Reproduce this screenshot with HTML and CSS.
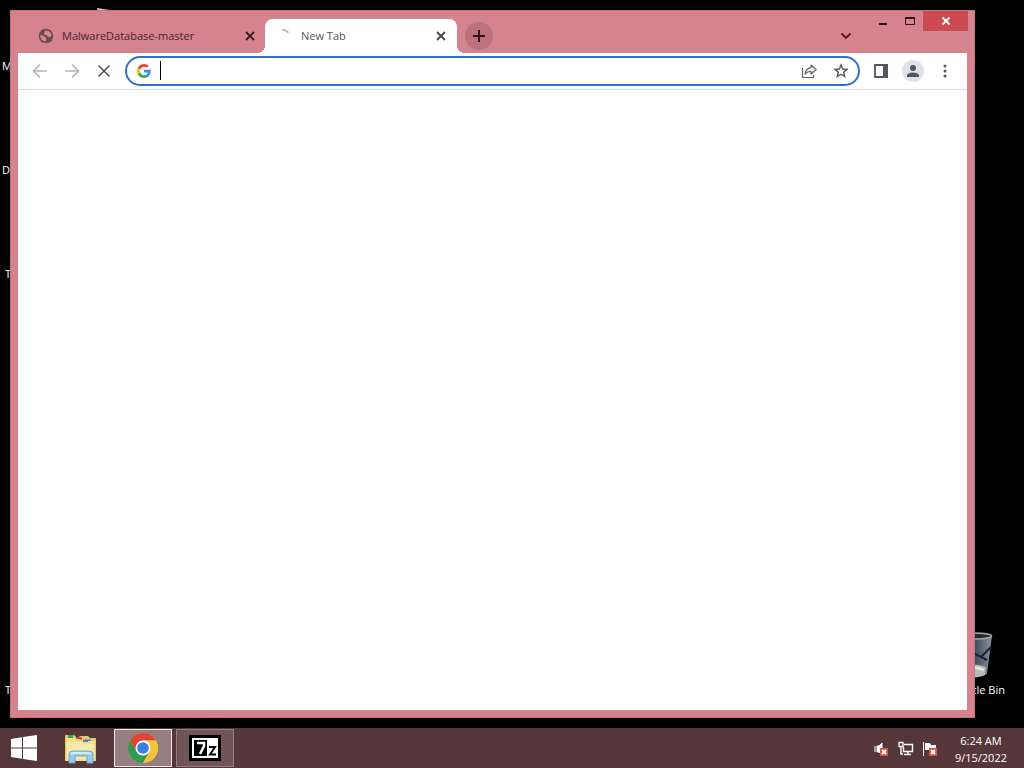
FILE: index.html
```html
<!DOCTYPE html>
<html lang="en">
<head>
<meta charset="utf-8">
<title>Desktop</title>
<link rel="stylesheet" href="styles.css">
</head>
<body>
<main class="desktop">
  <span class="shortcut shortcut-1">M</span>
  <span class="shortcut shortcut-2">D</span>
  <span class="shortcut shortcut-3">T</span>
  <span class="shortcut shortcut-4">T</span>
  <svg class="folder-peek" width="20" height="6" viewBox="0 0 20 6"><path d="M0 0L19 3V6H1z" fill="#d8d0bc"/></svg>
  <div class="recycle">
    <svg width="42" height="48" viewBox="0 0 42 48">
      <defs><linearGradient id="bin" x1="0" x2="1"><stop offset="0" stop-color="#333b49"/><stop offset=".6" stop-color="#465062"/><stop offset="1" stop-color="#8c939f"/></linearGradient></defs>
      <path d="M2 3L8 43Q22 49 36 42L41 3z" fill="url(#bin)"/>
      <path d="M40 15L30 25L22 21M30 25L36 28" fill="none" stroke="#1b2030" stroke-width="2"/>
      <path d="M8 34Q22 30 35 35L34 43Q22 48 9 43z" fill="#b9b9b4"/>
      <path d="M12 38Q22 33 33 38" stroke="#e5e4de" stroke-width="3" fill="none"/>
      <ellipse cx="21" cy="4" rx="19.500" ry="3" fill="#252a33" stroke="#a5a9ad" stroke-width="1.500"/>
    </svg>
    <span>cle Bin</span>
  </div>

  <section class="window">
    <header class="titlebar">
      <div class="tab">
        <svg width="16" height="16" viewBox="0 0 16 16"><circle cx="8" cy="8" r="7.300" fill="#70484e"/><path d="M2 7.500Q4 7 6 8.200T8.500 11Q8 12 7.500 13.500Q3 13 2 7.500M7 2.500Q12 2 13.600 7L12 9.300Q9.500 9.600 9.300 7.500L6.300 6.500Q6 4.500 7 2.500" fill="#d48991"/></svg>
        <span class="tab-title">MalwareDatabase-master</span>
        <button class="tab-close" aria-label="Close tab"><svg width="10" height="10" viewBox="0 0 10 10"><path d="M1 1L9 9M9 1L1 9" stroke="#3d1c22" stroke-width="1.800"/></svg></button>
      </div>
      <div class="tab active">
        <svg width="16" height="16" viewBox="0 0 16 16"><path d="M5 1.500Q9 2 11.500 4.500" fill="none" stroke="#a2b1b9" stroke-width="1.600"/></svg>
        <span class="tab-title">New Tab</span>
        <button class="tab-close" aria-label="Close tab"><svg width="10" height="10" viewBox="0 0 10 10"><path d="M1 1L9 9M9 1L1 9" stroke="#44474b" stroke-width="1.800"/></svg></button>
      </div>
      <button class="new-tab" aria-label="New tab"><svg width="12" height="12" viewBox="0 0 12 12"><path d="M6 0V12M0 6H12" stroke="#35131b" stroke-width="2"/></svg></button>
      <button class="tab-search" aria-label="Search tabs"><svg width="12" height="8" viewBox="0 0 12 8"><path d="M1.500 1.500L6 6L10.500 1.500" fill="none" stroke="#5d1822" stroke-width="1.800"/></svg></button>
      <div class="controls">
        <button aria-label="Minimize"><svg width="10" height="10" viewBox="0 0 10 10"><path d="M1 8H9" stroke="#35131b" stroke-width="2"/></svg></button>
        <button aria-label="Maximize"><svg width="10" height="10" viewBox="0 0 10 10"><path d="M.5 1.500H9.500V8.500H.5z" fill="none" stroke="#35131b"/><path d="M0 2H10" stroke="#35131b" stroke-width="2"/></svg></button>
        <button class="close" aria-label="Close"><svg width="10" height="10" viewBox="0 0 10 10"><path d="M1.500 1.500L8.500 8.500M8.500 1.500L1.500 8.500" stroke="#fff" stroke-width="1.800"/></svg></button>
      </div>
    </header>
    <nav class="toolbar">
      <button class="nav-button" aria-label="Back"><svg width="16" height="16" viewBox="0 0 16 16"><path d="M15 8H2M8 1.500L1.500 8L8 14.500" fill="none" stroke="#b5b7b9" stroke-width="1.600"/></svg></button>
      <button class="nav-button" aria-label="Forward"><svg width="16" height="16" viewBox="0 0 16 16"><path d="M1 8H14M8 1.500L14.500 8L8 14.500" fill="none" stroke="#b5b7b9" stroke-width="1.600"/></svg></button>
      <button class="nav-button" aria-label="Stop"><svg width="16" height="16" viewBox="0 0 16 16"><path d="M2.500 2.500L13.500 13.500M13.500 2.500L2.500 13.500" stroke="#55585c" stroke-width="1.700"/></svg></button>
      <div class="omnibox">
        <svg width="14" height="14" viewBox="0 0 48 48"><path fill="#ea4335" d="M24 9.500c3.500 0 6.700 1.200 9.200 3.600l6.900-6.900C35.900 2.400 30.500 0 24 0 14.600 0 6.500 5.400 2.600 13.200l8 6.200C12.400 13.700 17.700 9.500 24 9.500z"/><path fill="#4285f4" d="M47 24.600c0-1.600-.2-3.100-.4-4.600H24v9h12.900c-.6 3-2.200 5.500-4.700 7.200l7.700 6C44.400 38 47 31.800 47 24.600z"/><path fill="#fbbc05" d="M10.500 28.600a14.500 14.500 0 0 1 0-9.200l-8-6.200a24 24 0 0 0 0 21.600z"/><path fill="#34a853" d="M24 48c6.500 0 11.900-2.100 15.900-5.800l-7.700-6c-2.200 1.400-4.900 2.300-8.200 2.300-6.300 0-11.600-4.200-13.500-9.900l-8 6.200C6.500 42.600 14.600 48 24 48z"/></svg>
        <span class="caret"></span>
        <input class="address" type="text" aria-label="Address and search bar">
        <button aria-label="Share"><svg width="16" height="16" viewBox="0 0 16 16"><path d="M1.500 5V14.500H12.500V12" fill="none" stroke="#5f6368" stroke-width="1.200"/><path d="M10 2L15.200 6.500L10 11V8.500Q6.500 8.200 4 11Q4.500 5.500 10 4.600z" fill="none" stroke="#5f6368" stroke-width="1.200" stroke-linejoin="round"/></svg></button>
        <button aria-label="Bookmark this tab"><svg width="16" height="16" viewBox="0 0 16 16"><path d="M8 2L9.700 6L14 6.400L10.700 9.200L11.700 13.500L8 11.200L4.300 13.500L5.300 9.200L2 6.400L6.300 6z" fill="none" stroke="#54585d" stroke-width="1.400"/></svg></button>
      </div>
      <button class="side-panel" aria-label="Side panel"><svg width="14" height="14" viewBox="0 0 14 14"><path d="M1 1H13V13H1z" fill="#fff" stroke="#54575c" stroke-width="1.800"/><path d="M9 0H14V14H9z" fill="#54575c"/></svg></button>
      <button class="profile" aria-label="Profile"><svg width="14" height="14" viewBox="0 0 14 14" fill="#4c5867"><circle cx="7" cy="4" r="3"/><path d="M1 13V11Q2 8.500 7 8.500T13 11V13z"/></svg></button>
      <button class="menu" aria-label="Menu"><svg width="4" height="14" viewBox="0 0 4 14" fill="#54575c"><circle cx="2" cy="2" r="1.500"/><circle cx="2" cy="7" r="1.500"/><circle cx="2" cy="12" r="1.500"/></svg></button>
    </nav>
    <div class="page"></div>
  </section>
</main>

<footer class="taskbar">
  <button class="start" aria-label="Start"><svg width="26" height="26" viewBox="0 0 26 26" fill="#fff"><path d="M0 4L11 2.300V12.400H0zM12 2.100L26 0V12.400H12zM0 13.400H11V23.700L0 22zM12 13.400H26V26L12 23.900z"/></svg></button>
  <button class="task" aria-label="File Explorer"><svg width="34" height="30" viewBox="0 0 34 30">
    <path d="M1 2Q1 1 2 1H10L12 3H15L16 2H24L26 4H31Q32 4 32 5V27H1z" fill="#dfc878"/>
    <path d="M4 2H9" stroke="#36a852" stroke-width="2"/><path d="M12 4.500H18" stroke="#d44a36" stroke-width="2"/><path d="M21 6.500H27" stroke="#4a82bd" stroke-width="2"/>
    <path d="M2 4H14L17 7H31V27H2z" fill="#f4df91"/><path d="M3 8H17L20 10H30V25H3z" fill="#f8e9ab"/>
    <path d="M4 3H9" stroke="#36a852" stroke-width="2"/><path d="M12 4H17" stroke="#d44a36" stroke-width="2"/><path d="M19 7H24" stroke="#4a82bd" stroke-width="2"/>
    <path d="M5 29V20Q5 17 9 17H25Q29 17 29 20V29H23V22H11V29z" fill="#92cee9" stroke="#66acd0"/><path d="M7 20Q8 19 10 19H24Q26 19 27 20" fill="none" stroke="#d2edf6" stroke-width="2"/>
  </svg></button>
  <button class="task current" aria-label="Google Chrome"><svg width="30" height="30" viewBox="0 0 30 30">
    <circle cx="15" cy="15" r="15" fill="#f5c33b"/>
    <path d="M2 7.500A15 15 0 0 1 28 7.500H15L8.500 18.800z" fill="#db4437"/>
    <path d="M2 7.500A15 15 0 0 0 15 30L21.500 18.800L8.500 18.800z" fill="#329a50"/>
    <path d="M28 7.500A15 15 0 0 1 15 30L21.500 18.800L21.500 11L15 7.500z" fill="#f5c33b"/>
    <circle cx="15" cy="15" r="7.500" fill="#fff"/><circle cx="15" cy="15" r="5.800" fill="#397fe6"/>
  </svg></button>
  <button class="task running" aria-label="7-Zip"><svg width="32" height="26" viewBox="0 0 32 26">
    <path d="M0 0H32V26H0z"/><path d="M3 3H29V23H3z" fill="#fff"/><path d="M5 5H18V21H5z"/><path d="M8 8H15V11L11 19" fill="none" stroke="#fff" stroke-width="2.500"/><path d="M20 12H26L21 19.500H27" fill="none" stroke="#000" stroke-width="2"/>
  </svg></button>
  <div class="tray">
    <svg width="16" height="16" viewBox="0 0 16 16"><path d="M1 5V11M3 5H5L8 2V14L5 11H3z" fill="#fff" stroke="#fff"/><path d="M6 7H14V15H6z" fill="#cf5546"/><path d="M8 9L12 13M12 9L8 13" stroke="#fff" stroke-width="1.800"/></svg>
    <svg width="16" height="16" viewBox="0 0 16 16"><path d="M6 3.500H14.500V10.500H5.500V6M10 11V14M6 13.500H13M3 6V13H5" fill="none" stroke="#fff" stroke-width="1.400"/><path d="M1 1.500H5V5.500H1z" fill="#553538" stroke="#fff" stroke-width="1.300"/></svg>
    <svg width="16" height="16" viewBox="0 0 16 16"><path d="M1.500 1V15" stroke="#fff"/><path d="M3 2H8L9 4H14V9H3z" fill="#fff"/><path d="M7 7H15V15H7z" fill="#cf5546"/><path d="M9 9L13 13M13 9L9 13" stroke="#fff" stroke-width="1.800"/></svg>
  </div>
  <div class="clock"><time>6:24 AM</time><time>9/15/2022</time></div>
</footer>
</body>
</html>
```
FILE: styles.css
```css
* { box-sizing: border-box; }
body {
  margin: 0;
  height: 100vh;
  display: flex;
  flex-direction: column;
  background: #000;
  color: #fff;
  font-family: "Open Sans", "Noto Sans", sans-serif;
  font-size: 11px;
  line-height: 16px;
  overflow: hidden;
}
svg { display: block; flex: none; }
button {
  padding: 0;
  border: 0;
  background: none;
  display: flex;
  align-items: center;
  justify-content: center;
  flex: none;
}
.desktop { flex: 1; position: relative; }
.shortcut { position: absolute; left: 2px; }
.shortcut-1 { top: 58px; }
.shortcut-2 { top: 162px; }
.shortcut-3 { top: 266px; left: 5px; }
.shortcut-4 { top: 682px; left: 5px; }
.folder-peek { position: absolute; left: 97px; top: 8px; }
.recycle {
  position: absolute;
  right: 19px;
  bottom: 30px;
  display: flex;
  flex-direction: column;
  align-items: flex-end;
  gap: 2px;
}
.recycle svg { margin-right: 12px; }

.window {
  position: absolute;
  inset: 10px 49px 10px 10px;
  display: flex;
  flex-direction: column;
  padding: 0 7px 7px;
  background: #d5848f;
  border: 1px solid #c5737e;
}
.titlebar { display: flex; align-items: flex-start; height: 42px; margin-right: -1px; padding-left: 8px; }
.tab {
  display: flex;
  align-items: center;
  flex: 0 1 239px;
  height: 34px;
  margin-top: 8px;
  padding: 0 9px 0 12px;
  gap: 8px;
  color: #4a252b;
}
.tab-title { flex: 1; white-space: nowrap; }
.tab.active {
  position: relative;
  flex-basis: 192px;
  padding-right: 10px;
  color: #505357;
  background: #fff;
  border-radius: 8px 8px 0 0;
}
.tab.active::before, .tab.active::after {
  content: "";
  position: absolute;
  bottom: 0;
  width: 8px;
  height: 8px;
}
.tab.active::before { right: 100%; background: radial-gradient(circle at 0 0, transparent 8px, #fff 8px); }
.tab.active::after { left: 100%; background: radial-gradient(circle at 100% 0, transparent 8px, #fff 8px); }
.tab-close { width: 12px; height: 16px; }
.new-tab { width: 28px; height: 28px; margin: 11px 0 0 8px; border-radius: 50%; background: #bc727c; }
.tab-search { width: 28px; height: 28px; margin: 11px 0 0 auto; }
.controls { display: flex; margin-left: 9px; }
.controls button { width: 27px; height: 20px; }
.controls .close { width: 45px; background: #cb4b50; }

.toolbar {
  display: flex;
  align-items: center;
  height: 37px;
  padding: 0 11px 0 8px;
  background: #fff;
  border-bottom: 1px solid #d9dadd;
}
.nav-button { width: 28px; height: 28px; margin-right: 4px; }
.omnibox {
  display: flex;
  align-items: center;
  flex: 1;
  height: 30px;
  margin: 0 6px 0 3px;
  padding: 0 9px 0 10px;
  gap: 16px;
  border: 2px solid #316fc8;
  border-radius: 15px;
  background: #fff;
}
.caret { width: 1px; height: 19px; background: #000; margin: 0 0 2px -7px; }
.address { flex: 1; min-width: 0; border: 0; outline: 0; background: none; font: inherit; }
.side-panel, .profile, .menu { width: 22px; height: 22px; margin-left: 4px; }
.profile { margin-left: 10px; border-radius: 50%; background: #dfe2e9; }
.menu { margin-left: 10px; }
.page { flex: 1; background: #fff; }

.taskbar {
  display: flex;
  align-items: center;
  height: 40px;
  padding-right: 17px;
  background: #563739;
}
.start { width: 47px; height: 40px; }
.task { width: 58px; height: 38px; margin-left: 4px; border: 1px solid transparent; }
.start + .task { margin-left: 5px; padding-top: 2px; }
.current { background: #95807f; border-color: #eee6e5; }
.running { background: #705456; border-color: #937d7e; }
.tray { display: flex; gap: 8px; margin: 2px 17px 0 auto; }
.clock { display: flex; flex-direction: column; align-items: center; margin-top: 2px; line-height: 17px; }
```
